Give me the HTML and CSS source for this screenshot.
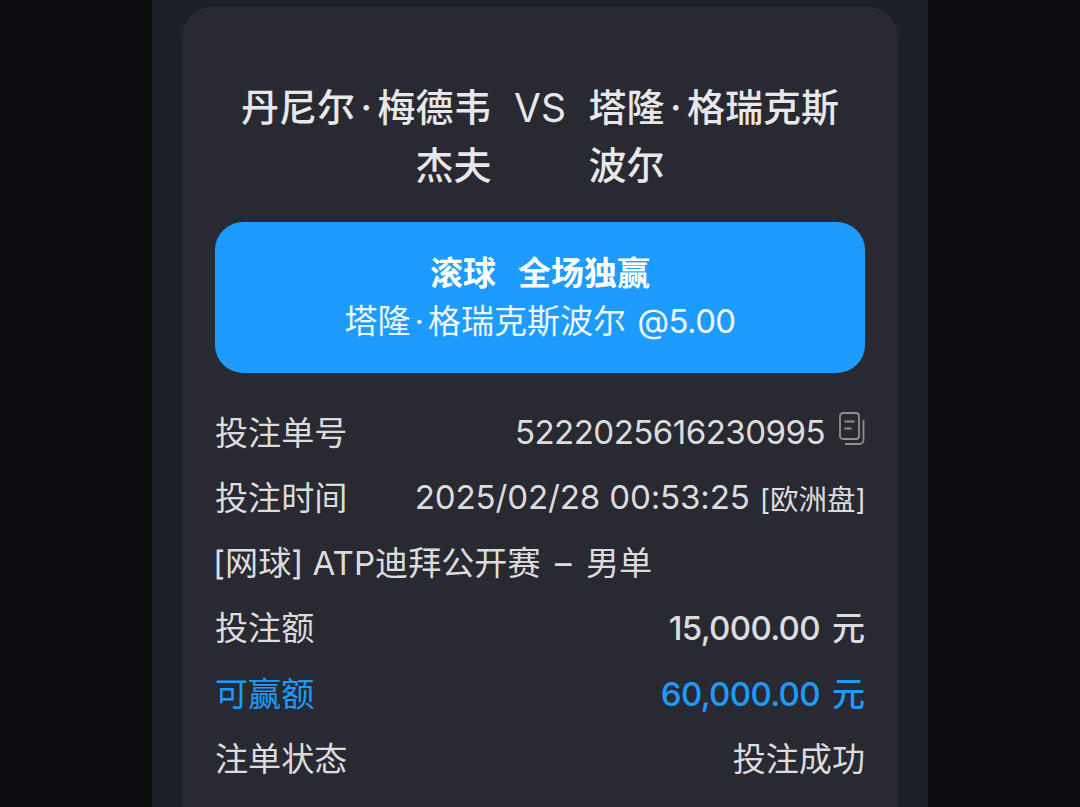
FILE: index.html
```html
<!DOCTYPE html>
<html lang="zh-CN">

<head>
    <meta charset="UTF-8">
    <title>注单详情</title>
    <link rel="stylesheet" href="styles.css">
</head>

<body>
    <div class="panel">
        <div class="card">
            <!-- Match title -->
            <div class="match">
                <div class="team team-home">丹尼尔<span class="dot">·</span>梅德韦<br>杰夫</div>
                <div class="versus">VS</div>
                <div class="team team-away">塔隆<span class="dot">·</span>格瑞克斯<br>波尔</div>
            </div>

            <!-- Selection -->
            <div class="pick">
                <div class="pick-market">滚球<span class="pick-gap"></span>全场独赢</div>
                <div class="pick-name">塔隆<span class="dot-small">·</span>格瑞克斯波尔 <span class="odds">@5.00</span></div>
            </div>

            <!-- Bet details -->
            <div class="rows">
                <div class="row">
                    <span>投注单号</span>
                    <span class="row-value">
                        <span class="bet-no">5222025616230995</span>
                        <svg class="copy-icon" viewBox="0 0 26 33" fill="none" stroke="#8e8e94" stroke-width="1.8">
                            <rect x="1" y="1" width="19" height="26" rx="3"></rect>
                            <path d="M5.500 9.500h10M5.500 16.500h7"></path>
                            <path d="M24.500 8v20a4 4 0 0 1-4 4H6"></path>
                        </svg>
                    </span>
                </div>
                <div class="row">
                    <span>投注时间</span>
                    <span class="row-value row-time"><span class="time">2025/02/28 00:53:25</span><span class="market">[欧洲盘]</span></span>
                </div>
                <div class="row">
                    <span class="league">[网球] ATP迪拜公开赛<span class="dash">–</span>男单</span>
                </div>
                <div class="row">
                    <span>投注额</span>
                    <span class="row-value amount"><span class="money">15,000.00</span><span>元</span></span>
                </div>
                <div class="row row-win">
                    <span>可赢额</span>
                    <span class="row-value amount"><span class="money">60,000.00</span><span>元</span></span>
                </div>
                <div class="row">
                    <span>注单状态</span>
                    <span class="row-value">投注成功</span>
                </div>
            </div>
        </div>
    </div>
</body>

</html>
```

FILE: styles.css
```css
html,
body {
    height: 100%;
}

body {
    margin: 0;
    background: #0d0e11;
    color: #e6e6e8;
    font-family: Inter, "Noto Sans CJK SC", sans-serif;
    overflow: hidden;
}

.panel {
    width: 776px;
    height: 807px;
    margin: 0 auto;
    padding: 7px 30px 0;
    box-sizing: border-box;
    background: #1e2027;
    overflow: hidden;
}

.card {
    height: 800px;
    padding: 71px 33px 0;
    box-sizing: border-box;
    background: #292931;
    border-radius: 30px 30px 0 0;
}

/* Match title */
.match {
    display: flex;
    justify-content: center;
    font-size: 38px;
    font-weight: 500;
    line-height: 58px;
    color: #e8e8ea;
}

.team {
    width: 251px;
    white-space: nowrap;
}

.team-home {
    text-align: right;
}

.team-away {
    text-align: left;
}

.dot {
    margin: 0 5.500px;
}

.versus {
    width: 97px;
    padding-top: 1px;
    text-align: center;
    font-size: 39px;
    font-weight: 400;
}

/* Selection */
.pick {
    height: 151px;
    margin-top: 28px;
    padding-top: 27px;
    box-sizing: border-box;
    background: #1e9bff;
    border-radius: 28px;
    color: #fff;
    text-align: center;
    font-size: 33px;
    line-height: 48px;
}

.pick-market {
    font-weight: 700;
}

.pick-gap {
    display: inline-block;
    width: 22px;
}

.pick-name {
    color: #eef6ff;
}

.dot-small {
    margin: 0 4px;
}

.odds {
    margin-left: 2px;
    letter-spacing: -0.600px;
}

/* Bet details */
.rows {
    margin-top: 25px;
    font-size: 33.100px;
    color: #dcdcdf;
}

.row {
    display: flex;
    justify-content: space-between;
    align-items: center;
    height: 65.400px;
    margin-top: -0.100px;
}

.row-value {
    display: flex;
    align-items: center;
    gap: 14px;
}

.row-time {
    gap: 10px;
}

.bet-no {
    margin-top: 2px;
    letter-spacing: -0.550px;
}

.time {
    margin-top: 2px;
    letter-spacing: -0.150px;
}

.market {
    font-size: 28.500px;
    margin-top: 4px;
    margin-right: -1px;
}

.league {
    margin-left: -2px;
}

.dash {
    margin: 0 14.500px;
}

.amount {
    font-weight: 500;
    gap: 12px;
}

.money {
    margin-top: 4px;
    letter-spacing: -0.700px;
}

.row-win {
    color: #1e9bff;
}

.copy-icon {
    width: 26px;
    height: 33px;
    margin-top: -4px;
}
```
